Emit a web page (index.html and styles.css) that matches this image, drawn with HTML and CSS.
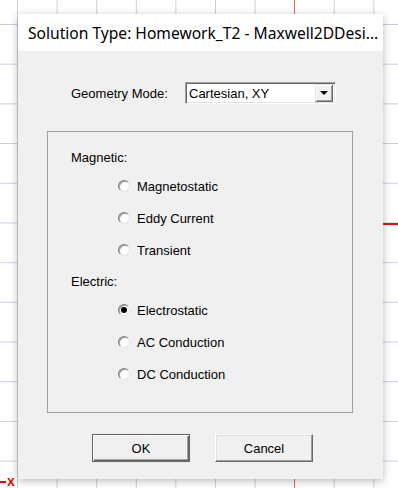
FILE: index.html
```html
<!DOCTYPE html>
<html lang="en">
<head>
  <meta charset="UTF-8">
  <meta name="viewport" content="width=device-width, initial-scale=1.0">
  <title>Solution Type</title>
  <link rel="stylesheet" href="styles.css">
</head>
<body>
  <div class="axis-y"></div>
  <div class="axis-x"></div>
  <div class="axis-label"><span class="tick"></span>x</div>

  <div class="dialog">
    <div class="titlebar">Solution Type: Homework_T2 - Maxwell2DDesi...</div>
    <div class="content">
      <div class="geometry">
        <span class="geometry-label">Geometry Mode:</span>
        <div class="select">
          <span class="select-value">Cartesian, XY</span>
          <span class="select-arrow"></span>
        </div>
      </div>

      <div class="group">
        <div class="group-title">Magnetic:</div>
        <div class="options">
          <div class="option"><span class="radio"></span>Magnetostatic</div>
          <div class="option"><span class="radio"></span>Eddy Current</div>
          <div class="option"><span class="radio"></span>Transient</div>
        </div>
        <div class="group-title second">Electric:</div>
        <div class="options">
          <div class="option"><span class="radio checked"></span>Electrostatic</div>
          <div class="option"><span class="radio"></span>AC Conduction</div>
          <div class="option"><span class="radio"></span>DC Conduction</div>
        </div>
      </div>

      <div class="buttons">
        <div class="button default">OK</div>
        <div class="button">Cancel</div>
      </div>
    </div>
  </div>
</body>
</html>
```

FILE: styles.css
```css
html, body {
  margin: 0;
  padding: 0;
}
body {
  position: relative;
  width: 398px;
  height: 488px;
  overflow: hidden;
  font-family: 'Liberation Sans', Arial, sans-serif;
  font-size: 13px;
  color: #000;
  background-color: #fff;
  background-image:
    linear-gradient(to right, #cdcde2 1px, transparent 1px),
    linear-gradient(to bottom, #cdcde2 1px, transparent 1px);
  background-size: 39.6px 39.7px;
  background-position: 17px 24px;
  padding: 14px 0 0 18px;
  box-sizing: border-box;
}

/* canvas axes behind the dialog */
.axis-y {
  position: absolute;
  left: 294px;
  top: 0;
  bottom: 0;
  width: 1px;
  background: #e26a6a;
}
.axis-x {
  position: absolute;
  left: 300px;
  right: 0;
  top: 223px;
  height: 2px;
  background: #e01010;
}
.axis-label {
  position: absolute;
  left: 0;
  top: 475px;
  color: #e00;
  font-weight: bold;
  font-size: 14px;
  line-height: 13px;
  display: flex;
  align-items: center;
}
.axis-label .tick {
  display: inline-block;
  width: 6px;
  height: 2px;
  margin-right: 1px;
  background: #e00;
}

.dialog {
  position: relative;
  width: 365px;
  height: 465px;
  background: #f0f0f0;
  box-shadow: 0 2px 8px rgba(0, 0, 0, 0.28);
  display: flex;
  flex-direction: column;
}
.titlebar {
  height: 37px;
  background: #fff;
  display: flex;
  align-items: center;
  padding-left: 10px;
  font-family: 'Noto Sans', 'Open Sans', sans-serif;
  font-size: 15.6px;
  white-space: nowrap;
  overflow: hidden;
}
.content {
  flex: 1;
  padding: 31px 0 0 29px;
}

.geometry {
  display: flex;
  align-items: center;
  height: 22px;
  padding-left: 24px;
}
.geometry-label {
  width: 114px;
}
.select {
  width: 151px;
  height: 22px;
  box-sizing: border-box;
  background: #fff;
  border-top: 1px solid #a0a0a0;
  border-left: 1px solid #a0a0a0;
  border-right: 1px solid #fff;
  border-bottom: 1px solid #fff;
  box-shadow: inset 1px 1px 0 #696969, inset -1px -1px 0 #e3e3e3;
  display: flex;
  align-items: center;
  padding: 2px;
}
.select-value {
  flex: 1;
  padding-left: 1px;
}
.select-arrow {
  position: relative;
  width: 18px;
  height: 18px;
  box-sizing: border-box;
  background: #f0f0f0;
  border-top: 1px solid #e3e3e3;
  border-left: 1px solid #e3e3e3;
  border-right: 1px solid #696969;
  border-bottom: 1px solid #696969;
  box-shadow: inset 1px 1px 0 #fff, inset -1px -1px 0 #a0a0a0;
}
.select-arrow::after {
  content: "";
  position: absolute;
  left: 4px;
  top: 6px;
  border-left: 4px solid transparent;
  border-right: 4px solid transparent;
  border-top: 4px solid #000;
}

.group {
  margin-top: 27px;
  width: 306px;
  height: 282px;
  box-sizing: border-box;
  border: 1px solid #a0a0a0;
  padding: 18px 0 0 23px;
}
.group-title {
  height: 16px;
  line-height: 16px;
}
.group-title.second {
  margin-top: 8px;
}
.options {
  margin-top: 4px;
  padding-left: 47px;
}
.option {
  height: 32px;
  display: flex;
  align-items: center;
}
.radio {
  position: relative;
  width: 12px;
  height: 12px;
  box-sizing: border-box;
  border-radius: 50%;
  margin-right: 7px;
  background: #fff;
  border: 1px solid;
  border-color: #808080 #e3e3e3 #e3e3e3 #808080;
  box-shadow: inset 1px 1px 0 #a0a0a0;
}
.radio.checked::after {
  content: "";
  position: absolute;
  left: 2px;
  top: 2px;
  width: 6px;
  height: 6px;
  border-radius: 50%;
  background: #000;
}

.buttons {
  display: flex;
  gap: 25px;
  margin-top: 21px;
  padding-left: 45px;
}
.button {
  width: 98px;
  height: 28px;
  box-sizing: border-box;
  display: flex;
  align-items: center;
  justify-content: center;
  background: #f0f0f0;
  border-top: 1px solid #fff;
  border-left: 1px solid #fff;
  border-right: 1px solid #696969;
  border-bottom: 1px solid #696969;
  box-shadow: inset -1px -1px 0 #a0a0a0, inset 1px 1px 0 #e3e3e3;
}
.button.default {
  border: 1px solid #646464;
  box-shadow: inset 1px 1px 0 #fff, inset -1px -1px 0 #696969, inset -2px -2px 0 #a0a0a0;
}
```
